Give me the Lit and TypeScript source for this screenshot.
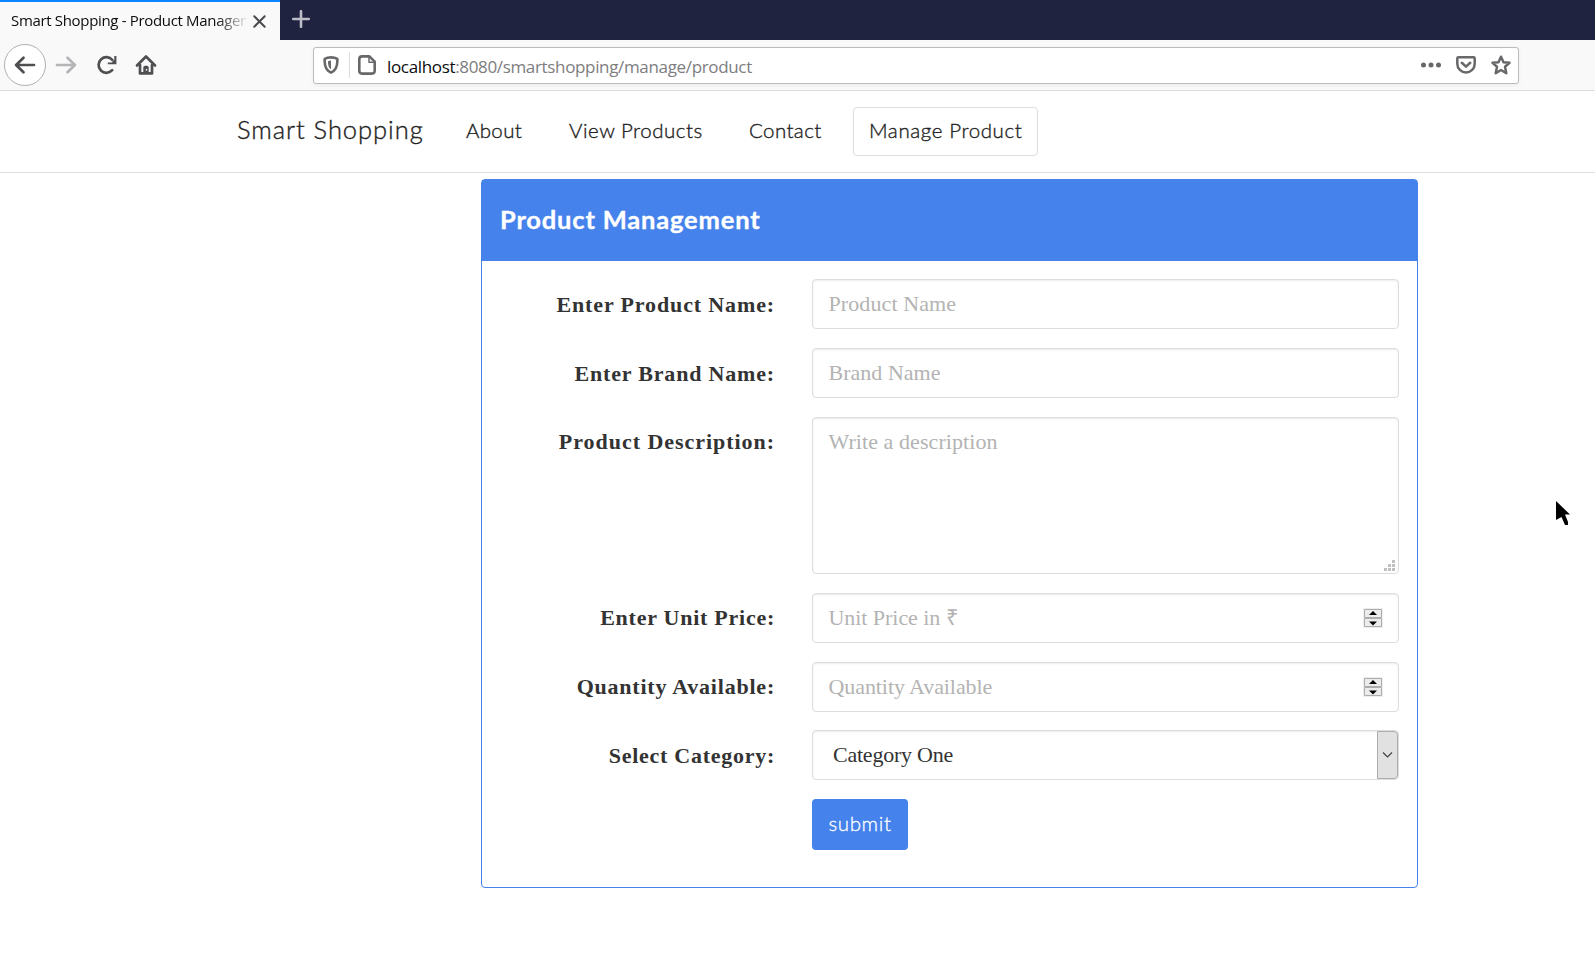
import { LitElement, html, css, svg } from "lit";

const icon = (w: number, h: number, body: unknown) =>
  html`<svg width=${w} height=${h} viewBox="0 0 ${w} ${h}" fill="none" stroke="currentColor" stroke-width="2.7" stroke-linecap="round" stroke-linejoin="round">${body}</svg>`;

const back = icon(22, 20, svg`<path d="M20 10H2M9.5 2.7L2.1 10l7.4 7.3"/>`);
const forward = icon(22, 20, svg`<path d="M2 10h18M12.5 2.7L19.9 10l-7.4 7.3"/>`);
const reload = icon(20, 20, svg`<path d="M15.2 15.2A7.8 7.8 0 1 1 15.4 5"/><path stroke="none" fill="currentColor" d="M19.4 1v8.2h-8.6V7.6h4.1L17.3 5V1z"/>`);
const home = icon(22, 22, svg`<path d="M2 11.5L11 2.5l9 9"/><path d="M5 11v8.4h12V11"/><path stroke="none" fill="currentColor" d="M8.3 20v-6.5q0-1.7 1.7-1.7h2q1.7 0 1.7 1.7V20z"/><path stroke="none" fill="#f9f9fa" d="M10.8 15h1.4v1.6h-1.4z"/>`);
const shield = icon(16, 18, svg`<path stroke-width="2.6" d="M8 1.4C5.6 1.4 3.5 1.8 1.7 2.8 1.3 9 2 14 8 16.6 14 14 14.7 9 14.3 2.8 12.5 1.8 10.4 1.4 8 1.4z"/><path stroke="none" fill="currentColor" d="M8 4.6v9C5.5 12 5 9 5 5.3 5.8 4.8 6.8 4.6 8 4.6z"/>`);
const page = icon(18, 20, svg`<path stroke-width="2.6" d="M4 1.4h7.4l5.3 5.3v9.1q0 2.8-2.8 2.8H4q-2.7 0-2.7-2.8V4.2Q1.3 1.4 4 1.4z"/><path stroke-width="1.5" d="M11 1.8v5.4h5.4"/>`);
const dots = icon(20, 6, svg`<g stroke="none" fill="currentColor"><circle cx="2.5" cy="3" r="2.5"/><circle cx="10" cy="3" r="2.5"/><circle cx="17.5" cy="3" r="2.5"/></g>`);
const pocket = icon(20, 18, svg`<path stroke-width="2.5" d="M2.4 1.3h15.2q1.1 0 1.1 1.1v5.4a8.7 8.7 0 0 1-17.4 0V2.4q0-1.1 1.1-1.1z"/><path stroke-width="2.6" d="M5.8 6.8L10 10.6l4.2-3.8"/>`);
const star = icon(20, 20, svg`<path stroke-width="2.5" d="M10 1.7l2.5 5.5 6 .6-4.5 4 1.3 6.4L10 15l-5.3 3.2L6 11.8l-4.5-4 6-.6z"/>`);
const close = icon(13, 13, svg`<path stroke-width="2" d="M1.3 1.3l10.4 10.4M11.7 1.3L1.3 11.7"/>`);
const plus = icon(18, 18, svg`<path stroke-width="2.6" d="M9 1.2v15.6M1.2 9h15.6"/>`);

type Field = { label: string; ls: number; hint: string; hls: number; kind: "text" | "area" | "number" | "select" };

const fields: Field[] = [
  { label: "Enter Product Name:", ls: 0.87, hint: "Product Name", hls: 0.1, kind: "text" },
  { label: "Enter Brand Name:", ls: 0.82, hint: "Brand Name", hls: 0.02, kind: "text" },
  { label: "Product Description:", ls: 0.96, hint: "Write a description", hls: 0.07, kind: "area" },
  { label: "Enter Unit Price:", ls: 0.75, hint: "Unit Price in ₹", hls: -0.05, kind: "number" },
  { label: "Quantity Available:", ls: 0.78, hint: "Quantity Available", hls: -0.08, kind: "number" },
  { label: "Select Category:", ls: 0.73, hint: "Category One", hls: -0.23, kind: "select" },
];

class BrowserChrome extends LitElement {
  static styles = css`
    :host { display: block; font-family: "Open Sans", "Noto Sans", sans-serif; }
    svg { display: block; flex: none; }
    .tabs { height: 40px; background: #202340; display: flex; }
    .tab { box-sizing: border-box; width: 280px; background: #f9f9fa; border-top: 2px solid #0a84ff; display: flex; align-items: center; padding: 0 14px 0 11px; color: #4a4a4f; }
    .title { width: 236px; margin-right: 6px; padding-bottom: 2px; overflow: hidden; white-space: nowrap; font-size: 15px; letter-spacing: -0.33px; color: #0c0c0d; -webkit-mask-image: linear-gradient(to right, #000 205px, transparent 238px); mask-image: linear-gradient(to right, #000 205px, transparent 238px); }
    .new { padding: 10px 12px; color: #bcbdc6; }
    .bar { box-sizing: border-box; height: 51px; background: #f9f9fa; border-bottom: 1px solid #dcdcdc; display: flex; align-items: center; padding-left: 4px; color: #4f4f52; }
    .back { box-sizing: border-box; width: 42px; height: 42px; border: 1px solid #b1b1b3; border-radius: 50%; background: #fff; display: grid; place-items: center; }
    .forward { margin-left: 9px; color: #b5b5b8; }
    .reload { margin-left: 20px; }
    .home { margin-left: 18px; }
    .url { box-sizing: border-box; margin-left: 156px; width: 1206px; height: 37px; border: 1px solid #bcbcbe; border-radius: 3px; background: #fff; box-shadow: 0 1px 4px rgba(0,0,0,.06); display: flex; align-items: center; padding: 0 7px 0 9px; color: #68686b; }
    .rule { width: 1px; height: 26px; background: #dcdcde; margin: 0 8px 0 10px; }
    .address { flex: 1; margin-left: 11px; padding-top: 3px; font-size: 17px; letter-spacing: -0.34px; color: #7d7d80; white-space: nowrap; }
    .host { color: #0c0c0d; }
    .pocket { margin-left: 15px; }
    .star { margin-left: 15px; }
  `;
  render() {
    return html`
      <div class="tabs">
        <div class="tab"><span class="title">Smart Shopping - Product Manager</span>${close}</div>
        <div class="new">${plus}</div>
      </div>
      <div class="bar">
        <div class="back">${back}</div>
        <div class="forward">${forward}</div>
        <div class="reload">${reload}</div>
        <div class="home">${home}</div>
        <div class="url">
          ${shield}<span class="rule"></span>${page}
          <span class="address"><span class="host">localhost</span>:8080/smartshopping/manage/product</span>
          ${dots}<span class="pocket">${pocket}</span><span class="star">${star}</span>
        </div>
      </div>`;
  }
}
customElements.define("browser-chrome", BrowserChrome);

class ProductForm extends LitElement {
  static styles = css`
    :host { display: block; }
    .card { box-sizing: border-box; width: 937px; height: 709px; border: 1px solid #4582ec; border-radius: 4px; background: #fff; }
    .head { box-sizing: border-box; height: 81px; background: #4582ec; color: #fff; padding: 0 18px 3px; display: flex; align-items: center; font: 700 25.5px "Lato", sans-serif; letter-spacing: .82px; -webkit-text-stroke: .35px #fff; }
    .body { padding: 18px; display: flex; flex-direction: column; gap: 19px; }
    .row { display: grid; grid-template-columns: 275px 587px; column-gap: 37px; }
    .row.select { margin-top: -1px; }
    label { box-sizing: border-box; height: 50px; padding-top: 1px; line-height: 50px; text-align: right; white-space: nowrap; font-family: "Liberation Serif", serif; font-weight: 700; font-size: 22px; color: #333; }
    .area label, .number label { padding-top: 0; line-height: 49px; }
    .field { display: grid; position: relative; }
    input, textarea, select { box-sizing: border-box; width: 587px; height: 50px; margin: 0; border: 1px solid #ddd; border-radius: 4px; background: #fff; box-shadow: inset 0 1px 2px rgba(0,0,0,.08); padding: 0 15.5px; font: 22px/48px "Liberation Serif", serif; letter-spacing: inherit; color: #333; outline: none; appearance: none; -webkit-appearance: none; }
    textarea { height: 157px; padding: 11px 15.5px; line-height: 26px; resize: none; display: block; }
    select { padding-left: 20px; }
    ::placeholder { color: #b3b3b3; opacity: 1; }
    .grip { position: absolute; right: 4px; bottom: 3px; }
    .spin { position: absolute; right: 16px; top: 15px; }
    .drop { position: absolute; right: 1px; top: 1px; }
    svg { display: block; }
    button { width: 96px; height: 51px; border: 0; border-radius: 4px; background: #4582ec; color: #fff; padding: 0 0 4px; font: 300 20.5px "Lato", sans-serif; letter-spacing: .62px; -webkit-text-stroke: .3px #fff; grid-column: 2; }
  `;
  control(f: Field) {
    if (f.kind === "area")
      return html`<textarea placeholder=${f.hint}></textarea>
        <svg class="grip" width="11" height="11" fill="#c0c0c0"><path d="M8 0h3v3H8zM4 4h3v3H4zM8 4h3v3H8zM0 8h3v3H0zM4 8h3v3H4zM8 8h3v3H8z"/></svg>`;
    if (f.kind === "select")
      return html`<select><option>${f.hint}</option></select>
        <svg class="drop" width="21" height="48"><path d="M.5.5H17q3.5 0 3.5 3.5v40q0 3.5-3.5 3.5H.5z" fill="#e1e1e1" stroke="#adadad"/><path d="M6 21.5l4.5 4.5 4.5-4.5" fill="none" stroke="#444" stroke-width="1.2"/></svg>`;
    return html`<input type="text" placeholder=${f.hint}>
      ${f.kind === "number"
        ? html`<svg class="spin" width="20" height="20"><path d="M0 0h20v20H0z" fill="#eee"/><path d="M1.5 1.5h17v8h-17zM1.5 10.5h17v8h-17z" fill="#ececec" stroke="#adadad"/><path d="M6 7l4-4 4 4zM6 13.5h8l-4 4z"/></svg>`
        : ""}`;
  }
  render() {
    return html`<div class="card">
      <div class="head">Product Management</div>
      <div class="body">
        ${fields.map((f) => html`<div class="row ${f.kind}">
          <label style="letter-spacing:${f.ls}px">${f.label}</label>
          <div class="field" style="letter-spacing:${f.hls}px">${this.control(f)}</div>
        </div>`)}
        <div class="row"><button>submit</button></div>
      </div>
    </div>`;
  }
}
customElements.define("product-form", ProductForm);

class AppRoot extends LitElement {
  static styles = css`
    :host { display: block; position: relative; height: 959px; overflow: hidden; background: #fff; }
    nav { box-sizing: border-box; height: 82px; border-bottom: 1px solid #ddd; display: flex; align-items: center; padding: 0 0 0 237px; font: 300 20.5px "Lato", sans-serif; color: #222; -webkit-text-stroke: .35px #222; white-space: nowrap; }
    nav span { padding-bottom: 4px; }
    nav .brand { font-size: 25.5px; width: 229px; letter-spacing: .95px; padding-bottom: 5px; }
    .about { width: 103px; letter-spacing: .35px; }
    .view { width: 180px; letter-spacing: .5px; }
    .contact { width: 104px; letter-spacing: .4px; }
    nav .manage { box-sizing: border-box; width: 185px; height: 49px; border: 1px solid #ddd; border-radius: 4px; line-height: 45px; padding: 0 0 0 15px; letter-spacing: .6px; }
    main { padding: 6px 0 0 481px; }
    .cursor { position: absolute; left: 1556px; top: 501px; }
  `;
  render() {
    return html`
      <browser-chrome></browser-chrome>
      <nav>
        <span class="brand">Smart Shopping</span>
        <span class="about">About</span>
        <span class="view">View Products</span>
        <span class="contact">Contact</span>
        <span class="manage">Manage Product</span>
      </nav>
      <main><product-form></product-form></main>
      <svg class="cursor" width="15" height="25"><path d="M0 0l14 13.5H9L12 21v3H9L5.5 16 0 19z"/></svg>`;
  }
}
customElements.define("app-root", AppRoot);
